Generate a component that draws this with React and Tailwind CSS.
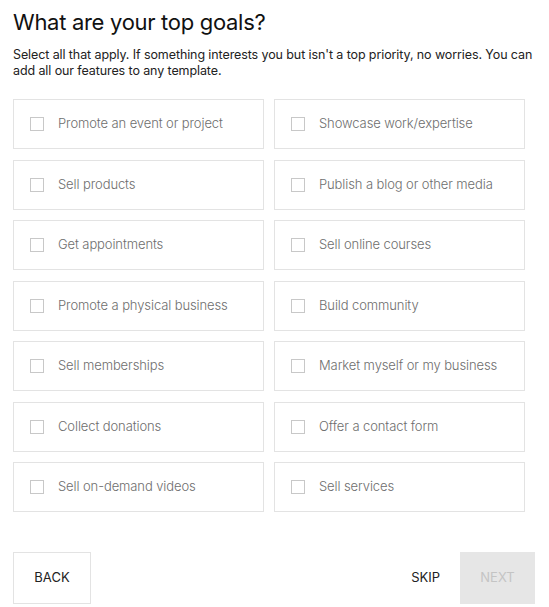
import React, { useState } from "react";

const goals = [
  "Promote an event or project",
  "Showcase work/expertise",
  "Sell products",
  "Publish a blog or other media",
  "Get appointments",
  "Sell online courses",
  "Promote a physical business",
  "Build community",
  "Sell memberships",
  "Market myself or my business",
  "Collect donations",
  "Offer a contact form",
  "Sell on-demand videos",
  "Sell services",
];

const App = () => {
  const [selected, setSelected] = useState([]);

  const toggle = (goal) => {
    setSelected((prev) =>
      prev.includes(goal) ? prev.filter((g) => g !== goal) : [...prev, goal]
    );
  };

  return (
    <div
      className="min-h-screen bg-white pl-[13px] pr-[14px] pt-[8px]"
      style={{ fontFamily: "Inter, 'Noto Sans', sans-serif" }}
    >
      <h1 className="text-[22px] leading-[28px] font-normal text-[#111] tracking-[-0.3px]">
        What are your top goals?
      </h1>
      <p className="mt-[11px] text-[12.5px] leading-[16px] text-[#222] tracking-[-0.1px]">
        Select all that apply. If something interests you but isn't a top priority, no worries. You can
        add all our features to any template.
      </p>

      {/* Goal options */}
      <div className="mt-[20px] grid w-[512px] grid-cols-2 gap-x-[10px] gap-y-[10.5px]">
        {goals.map((goal) => {
          const isOn = selected.includes(goal);
          return (
            <button
              key={goal}
              type="button"
              onClick={() => toggle(goal)}
              className="flex h-[50px] items-center border border-[#e3e3e3] bg-white pl-[16px] text-left"
            >
              <span
                className={`flex h-[14px] w-[14px] shrink-0 items-center justify-center border ${
                  isOn ? "border-[#111] bg-[#111]" : "border-[#c8c8c8] bg-white"
                }`}
              />
              <span className="ml-[14px] text-[13px] font-light text-[#6e6e6e] tracking-[-0.1px]">
                {goal}
              </span>
            </button>
          );
        })}
      </div>

      {/* Footer buttons */}
      <div className="mt-[40px] flex items-center justify-between">
        <button
          type="button"
          className="h-[52px] w-[78px] border border-[#e3e3e3] bg-white text-[13px] text-[#222]"
        >
          BACK
        </button>
        <div className="flex items-center">
          <button type="button" className="mr-[20px] text-[13px] text-[#222]">
            SKIP
          </button>
          <button
            type="button"
            disabled
            className="h-[52px] w-[75px] bg-[#e6e6e6] text-[13px] text-[#c4c4c4]"
          >
            NEXT
          </button>
        </div>
      </div>
    </div>
  );
};

export default App;
